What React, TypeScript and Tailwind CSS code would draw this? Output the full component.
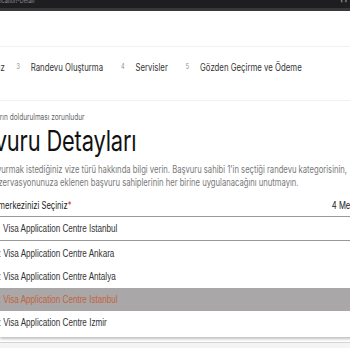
import React from 'react';

const steps = [
  { n: '2', label: 'Detaylarınız' },
  { n: '3', label: 'Randevu Oluşturma' },
  { n: '4', label: 'Servisler' },
  { n: '5', label: 'Gözden Geçirme ve Ödeme' },
];

const centres = [
  'Turkey: Visa Application Centre Ankara',
  'Turkey: Visa Application Centre Antalya',
  'Turkey: Visa Application Centre Istanbul',
  'Turkey: Visa Application Centre Izmir',
];

export default function App() {
  return (
    <div className="w-[350px] h-[350px] overflow-hidden bg-white">
      {/* the capture is squeezed horizontally, so the page is drawn at full width and scaled */}
      <div className="w-[449px] origin-top-left scale-x-[0.78] font-['Inter',sans-serif]">
        {/* browser strip */}
        <div className="h-[8px] bg-[#1e1e21] flex items-start justify-between overflow-hidden">
          <span className="text-[7px] leading-none text-[#8a8a8e] -mt-[3px] -ml-[14px] whitespace-nowrap">
            application-Detail
          </span>
          <span className="text-[7px] leading-none text-[#9a9a9e] -mt-[3px] mr-[4px]">◐◑</span>
        </div>
        <div className="h-[3px] bg-[#38383b]" />

        <div className="h-[36px] border-b border-[#f1f1f1]" />

        {/* steps */}
        <div className="h-[54px] border-b border-[#f1f1f1] flex items-start pt-[13px] whitespace-nowrap overflow-hidden">
          <div className="flex items-center -ml-[68px] text-[10px] text-[#333]">
            {steps.map((s, i) => (
              <div key={s.n} className={`flex items-center ${i === 0 ? 'mr-[15px]' : 'mr-[23px]'}`}>
                <span className="text-[7px] text-[#888] mr-[14px]">{s.n}</span>
                <span>{s.label}</span>
              </div>
            ))}
          </div>
        </div>

        {/* body */}
        <div className="pt-[10px] whitespace-nowrap">
          <p className="text-[8.4px] text-[#666] -ml-[43px]">Tüm alanların doldurulması zorunludur</p>
          <h1 className="text-[28px] leading-none font-normal text-[#111] -ml-[55px] mt-[3px] tracking-[-0.2px]">
            Başvuru Detayları
          </h1>
          <p className="text-[9.8px] leading-[13px] text-[#777] mt-[8px]">
            <span className="block -ml-[21px]">
              Başvurmak istediğiniz vize türü hakkında bilgi verin. Başvuru sahibi 1&apos;in seçtiği randevu kategorisinin,
            </span>
            <span className="block -ml-[11px]">
              rezervasyonunuza eklenen başvuru sahiplerinin her birine uygulanacağını unutmayın.
            </span>
          </p>

          <div className="flex justify-between items-center mt-[10px] text-[9.8px] text-[#222]">
            <span className="-ml-[25px]">
              Vize merkezinizi Seçiniz<span className="text-[#d0342c]">*</span>
            </span>
            <span className="-mr-[20px]">4 Merkez</span>
          </div>

          <div className="mt-[3px] -mr-[20px] border-y border-[#9a9a9a] h-[25px] flex items-center pl-[4px] font-['Liberation_Sans',Arial,sans-serif] text-[10.4px] text-[#333]">
            Visa Application Centre Istanbul
          </div>

          {/* open dropdown */}
          <div className="-mr-[20px] bg-white shadow-[0_2px_3px_rgba(0,0,0,0.25)] font-['Liberation_Sans',Arial,sans-serif] text-[10.4px] pt-[1px] pb-[3px]">
            {centres.map((c, i) => (
              <div
                key={c}
                className={`h-[23px] flex items-center ${
                  i === 2 ? 'bg-[#a9a7a7] text-[#c4643e]' : 'text-[#333]'
                }`}
              >
                <span className="-ml-[33px]">{c}</span>
              </div>
            ))}
          </div>
          <div className="mt-[5px] -mr-[20px] border-t border-[#d4d4d4] h-[6px] bg-[#f4f4f4]" />
        </div>
      </div>
    </div>
  );
}
